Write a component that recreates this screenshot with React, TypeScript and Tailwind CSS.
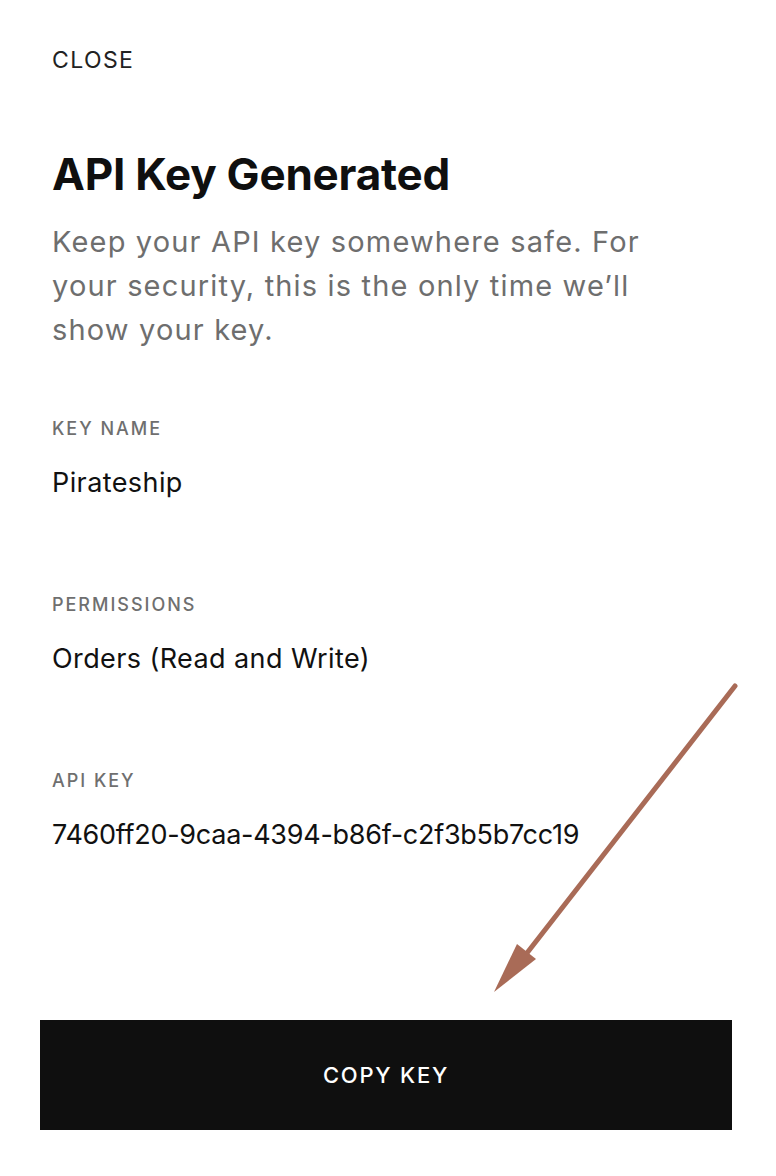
import React from "react";

interface FieldProps {
  label: string;
  value: string;
  first?: boolean;
  tight?: boolean;
}

const Field = ({ label, value, first, tight }: FieldProps) => {
  return (
    <div className={first ? "mt-[67px]" : "mt-[96px]"}>
      <p className="text-[18px] leading-[20px] font-medium tracking-[0.11em] text-[#6f6f6f]">
        {label}
      </p>
      <p
        className={
          tight
            ? "mt-[28px] text-[27px] leading-[32px] tracking-[-0.01em] text-[#111111]"
            : "mt-[28px] text-[27px] leading-[32px] tracking-[0.015em] text-[#111111]"
        }
      >
        {value}
      </p>
    </div>
  );
};

const Arrow = () => {
  return (
    <svg
      className="absolute left-0 top-0 pointer-events-none"
      width="776"
      height="1176"
      viewBox="0 0 776 1176"
    >
      <line
        x1="735"
        y1="686"
        x2="527"
        y2="953"
        stroke="#a96b57"
        strokeWidth="5"
        strokeLinecap="round"
      />
      <polygon points="494,992 517,944 536,959" fill="#a96b57" />
    </svg>
  );
};

const App = () => {
  return (
    <div className="relative w-[776px] h-[1176px] bg-white font-['Inter',_sans-serif] text-[#111111]">
      <div className="px-[52px] pt-[46px]">
        <button className="block text-[23px] leading-[28px] tracking-[0.06em] text-[#222222]">
          CLOSE
        </button>
        <h1 className="mt-[74px] text-[44px] leading-[52px] font-bold tracking-[-0.005em] text-[#0f0f0f]">
          API Key Generated
        </h1>
        <p className="mt-[20px] w-[620px] text-[29px] leading-[44px] tracking-[0.04em] text-[#6e6e6e]">
          Keep your API key somewhere safe. For your security, this is the
          only time we’ll show your key.
        </p>
        <Field first label="KEY NAME" value="Pirateship" />
        <Field label="PERMISSIONS" value="Orders (Read and Write)" />
        <Field
          tight
          label="API KEY"
          value="7460ff20-9caa-4394-b86f-c2f3b5b7cc19"
        />
      </div>
      <div className="px-[40px] mt-[169px] pr-[44px]">
        <button className="flex items-center justify-center w-full h-[110px] bg-[#0f0f0f] text-white text-[22px] font-medium tracking-[0.08em]">
          COPY KEY
        </button>
      </div>
      <Arrow />
    </div>
  );
};

export default App;
